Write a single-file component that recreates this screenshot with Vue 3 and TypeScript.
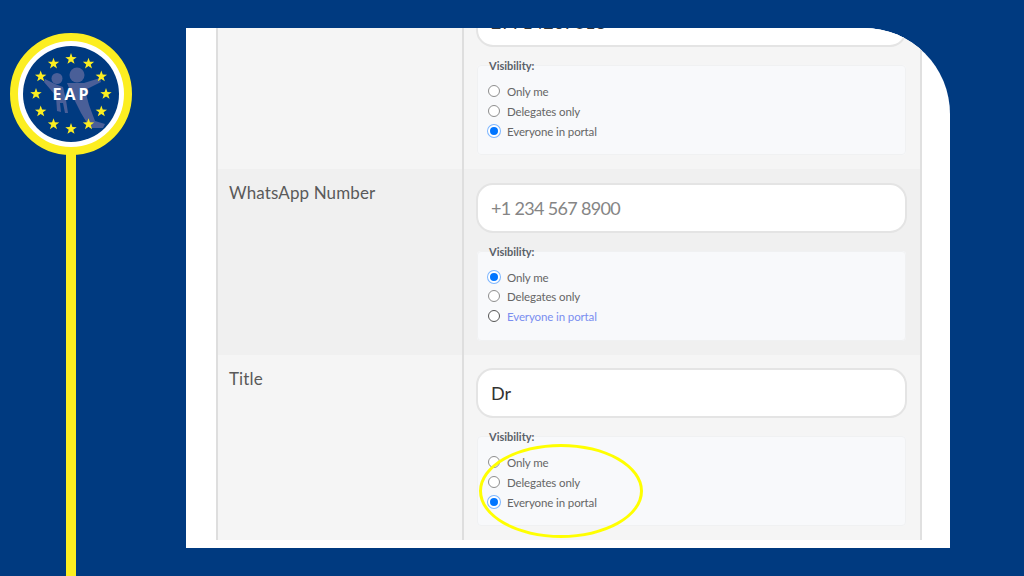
<template>
  <div class="page">
    <aside class="rail">
      <svg class="logo" viewBox="0 0 122 122" width="122" height="122">
        <circle cx="61" cy="61" r="57" fill="#fff" stroke="#fcee21" stroke-width="8" />
        <circle cx="61" cy="61" r="48" fill="#003a80" />
        <g fill="#4a5f98">
          <circle cx="67" cy="42" r="7.5" />
          <path d="M57 50 L74 50 L90 45 L91 49 L75 57 L79 72 L85 88 L95 91 L93 95 L80 95 L71 80 L61 60 Z" />
          <circle cx="47" cy="45.5" r="5.5" />
          <path d="M35 46 L45 51 L53 54 L56 67 L58 80 L55 80 L53 70 L50 70 L51 79 L47 78 L46 63 L34 49 Z" />
        </g>
        <polygon v-for="(s, i) in stars" :key="i" :points="s" fill="#fcee21" />
        <text x="62" y="66.5" class="logo-text" text-anchor="middle">EAP</text>
      </svg>
      <div class="rail-line"></div>
    </aside>

    <main class="sheet">
      <div class="table-clip">
        <div class="table">
          <section v-for="row in rows" :key="row.label" class="row" :class="{ alt: row.alt }">
            <div class="cell-label">{{ row.label }}</div>
            <div class="cell-field">
              <input class="text-input" readonly :value="row.value" :placeholder="row.placeholder" />
              <fieldset class="visibility">
                <legend>Visibility:</legend>
                <label v-for="opt in options" :key="opt" class="option" :class="{ hover: row.hover === opt }">
                  <input type="radio" :name="row.label" :checked="row.selected === opt" />
                  <span>{{ opt }}</span>
                </label>
              </fieldset>
            </div>
          </section>
        </div>
      </div>
      <div class="highlight"></div>
    </main>
  </div>
</template>

<script setup lang="ts">
type Row = {
  label: string
  value?: string
  placeholder?: string
  selected: string
  hover?: string
  alt?: boolean
}

const options = ['Only me', 'Delegates only', 'Everyone in portal']

const rows: Row[] = [
  { label: 'Mobile Number', value: '27714267018', selected: 'Everyone in portal' },
  { label: 'WhatsApp Number', placeholder: '+1 234 567 8900', selected: 'Only me', hover: 'Everyone in portal', alt: true },
  { label: 'Title', value: 'Dr', selected: 'Everyone in portal' }
]

// 12 stars on a ring round the logo centre
const starPoints = (cx: number, cy: number, r: number) => {
  const pts: string[] = []
  for (let i = 0; i < 10; i++) {
    const rad = i % 2 === 0 ? r : r * 0.4
    const a = (Math.PI / 5) * i - Math.PI / 2
    pts.push(`${(cx + rad * Math.cos(a)).toFixed(2)},${(cy + rad * Math.sin(a)).toFixed(2)}`)
  }
  return pts.join(' ')
}

const stars = Array.from({ length: 12 }, (_, i) => {
  const a = (Math.PI / 6) * i
  return starPoints(61 + 35 * Math.sin(a), 61 - 35 * Math.cos(a), 6)
})
</script>

<style>
html,
body {
  margin: 0;
  background: #003a80;
}
</style>

<style scoped>
.page {
  width: 1024px;
  height: 576px;
  display: flex;
  overflow: hidden;
  background: #003a80;
  font-family: Lato, "Open Sans", sans-serif;
}

.rail {
  width: 186px;
  flex: none;
  display: flex;
  flex-direction: column;
  align-items: flex-start;
  padding: 33px 0 0 10px;
  box-sizing: border-box;
}

.logo {
  display: block;
  flex: none;
}

.logo-text {
  font-family: "Open Sans", Lato, sans-serif;
  font-size: 16px;
  font-weight: 700;
  letter-spacing: 3px;
  fill: #fff;
}

.rail-line {
  flex: 1;
  width: 10px;
  margin-left: 56px;
  margin-top: -1px;
  background: #fcee21;
}

.sheet {
  position: relative;
  width: 764px;
  height: 520px;
  margin-top: 28px;
  padding: 0 28px 8px 30px;
  box-sizing: border-box;
  background: #fff;
  border-top-right-radius: 86px;
  overflow: hidden;
}

.table-clip {
  height: 512px;
  overflow: hidden;
}

.table {
  margin-top: -45px;
  border-left: 2px solid #dedede;
  border-right: 2px solid #e0e0e0;
}

.row {
  display: flex;
  height: 186px;
  background: #f5f5f5;
}

.row.alt {
  background: #f0f0f0;
}

.cell-label {
  width: 246px;
  flex: none;
  padding: 14px 0 0 11px;
  box-sizing: border-box;
  border-right: 2px solid #dedede;
  font-size: 17px;
  letter-spacing: 0.12px;
  line-height: 20px;
  color: #5a5a5a;
}

.cell-field {
  flex: 1;
  padding: 14px 13px 0 12px;
  min-width: 0;
}

.row:last-child .cell-field {
  padding-top: 13px;
}

.text-input {
  display: block;
  width: 100%;
  height: 50px;
  box-sizing: border-box;
  padding: 0 13px;
  border: 2px solid #e4e4e4;
  border-radius: 17px;
  background: #fff;
  outline: none;
  font-family: inherit;
  font-size: 18px;
  color: #333;
}

.text-input::placeholder {
  color: #858585;
  opacity: 1;
  letter-spacing: -0.67px;
}

.visibility {
  position: relative;
  display: flex;
  flex-direction: column;
  height: 90px;
  margin: 18px 1px 0;
  padding: 15px 10px 0;
  box-sizing: border-box;
  border: 1px solid #f0f1f2;
  border-radius: 4px;
  background: #f8f9fb;
}

.visibility legend {
  position: absolute;
  top: -7px;
  left: 11px;
  padding: 0;
  font-size: 11px;
  line-height: 14px;
  font-weight: 700;
  color: #5a6068;
}

.option {
  display: flex;
  align-items: center;
  height: 20px;
  font-size: 11.5px;
  letter-spacing: -0.12px;
  color: #666;
}

.alt .option {
  height: 19.5px;
}

.option span {
  margin-top: 1px;
}

.option.hover {
  color: #7a8ef0;
}

.option input {
  appearance: none;
  width: 12px;
  height: 12px;
  margin: 0 7px 0 0;
  box-sizing: border-box;
  border: 1px solid #8e8e8e;
  border-radius: 50%;
  background: #fff;
}

.option.hover input {
  border-color: #555;
}

.option input:checked {
  border: 2px solid #fff;
  background: #0075ff;
  box-shadow: 0 0 0 1px #7db6ff;
}

.highlight {
  position: absolute;
  left: 293px;
  top: 416px;
  width: 164px;
  height: 94px;
  box-sizing: border-box;
  border: 3px solid #ffff00;
  border-radius: 50%;
  pointer-events: none;
}
</style>
